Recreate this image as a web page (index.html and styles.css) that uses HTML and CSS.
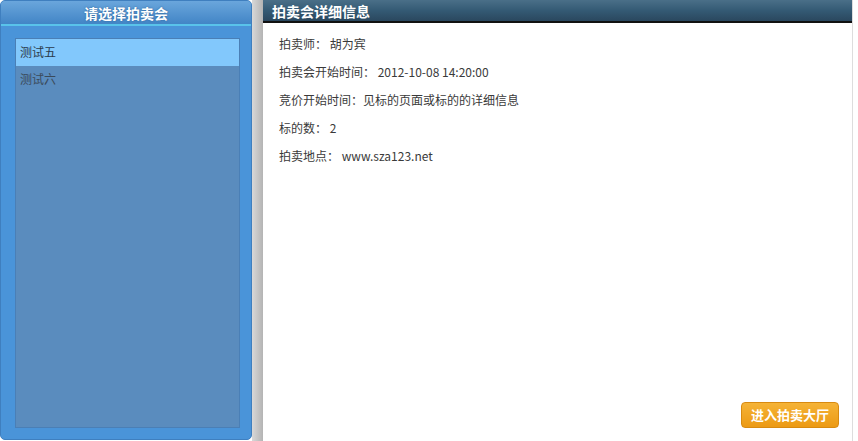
FILE: index.html
```html
<!DOCTYPE html>
<html lang="zh-CN">

<head>
    <meta charset="UTF-8">
    <title>拍卖会详细信息</title>
    <link rel="stylesheet" href="styles.css">
</head>

<body>
    <div class="page">
        <div class="side">
            <div class="side-head">请选择拍卖会</div>
            <div class="side-list">
                <div class="side-item active">测试五</div>
                <div class="side-item">测试六</div>
            </div>
        </div>

        <div class="divider"></div>

        <div class="main">
            <div class="main-head">拍卖会详细信息</div>
            <div class="main-body">
                <p>拍卖师： 胡为宾</p>
                <p>拍卖会开始时间： 2012-10-08 14:20:00</p>
                <p>竞价开始时间：见标的页面或标的的详细信息</p>
                <p>标的数： 2</p>
                <p>拍卖地点： www.sza123.net</p>
                <div class="actions">
                    <a class="btn" href="#">进入拍卖大厅</a>
                </div>
            </div>
        </div>
    </div>
</body>

</html>
```

FILE: styles.css
```css
body {
    margin: 0;
    font-family: "Noto Sans CJK SC", "Liberation Sans", sans-serif;
    font-size: 12px;
    color: #333;
    background: #fff;
}

.page {
    display: flex;
    height: 441px;
}

.side {
    width: 252px;
    height: 440px;
    background: #4a94d9;
    border-radius: 5px;
    box-sizing: border-box;
    border: 1px solid #3f7fbf;
    display: flex;
    flex-direction: column;
}

.side-head {
    height: 23px;
    line-height: 24px;
    text-align: center;
    color: #fff;
    font-size: 14px;
    font-weight: bold;
    text-shadow: 0 0 2px #2a5f95;
    background: linear-gradient(#6aa6dc, #4285c6);
    border-bottom: 2px solid #59c3ea;
    border-radius: 4px 4px 0 0;
}

.side-list {
    margin: 12px 11px 11px 14px;
    flex: 1;
    background: #5a8cbe;
    border: 1px solid #4a7fb6;
}

.side-item {
    height: 27px;
    line-height: 25px;
    padding-left: 4px;
    color: #3a4a5a;
}

.side-item.active {
    background: #82c8fc;
    color: #2a3a4a;
}

.divider {
    width: 11px;
    background: linear-gradient(to right, #d8d8d8, #b4b4b4);
}

.main {
    flex: 1;
    margin-right: 5px;
    border-right: 1px solid #ddd;
    display: flex;
    flex-direction: column;
}

.main-head {
    height: 21px;
    line-height: 22px;
    padding-left: 9px;
    color: #fff;
    font-size: 14px;
    font-weight: bold;
    background: linear-gradient(#4a6f88, #345a74 50%, #2a475e);
    border-bottom: 2px solid #111;
}

.main-body {
    flex: 1;
    padding: 7px 13px 0 16px;
    display: flex;
    flex-direction: column;
}

.main-body p {
    margin: 0;
    height: 28px;
    line-height: 28px;
    color: #3a3a3a;
}

.actions {
    margin-top: auto;
    display: flex;
    justify-content: flex-end;
    padding-bottom: 13px;
}

.btn {
    display: block;
    padding: 0 9px;
    height: 24px;
    line-height: 24px;
    font-size: 13px;
    font-weight: bold;
    color: #fff;
    text-decoration: none;
    background: linear-gradient(#f5b336, #ec9a14);
    border: 1px solid #d88a10;
    border-radius: 4px;
}
```
